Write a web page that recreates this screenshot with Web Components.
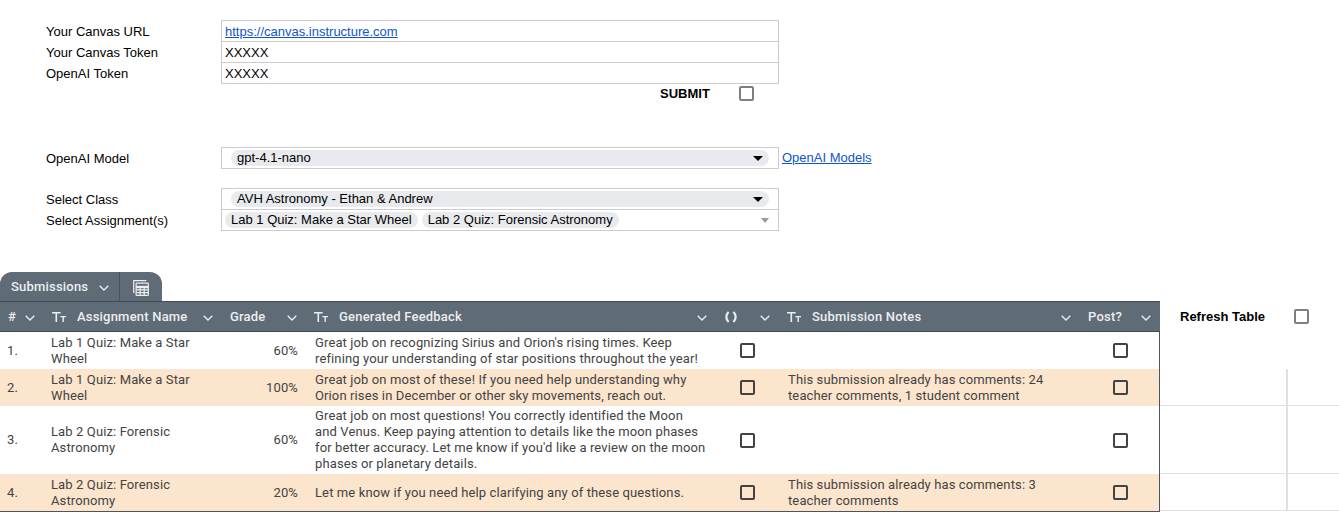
<!DOCTYPE html>
<html>
<head>
<meta charset="utf-8">
<title>Canvas feedback sheet</title>
<style>
html, body { margin: 0; padding: 0; background: #fff; overflow: hidden; }
body { width: 1339px; height: 515px; font-family: "Liberation Sans", Arial, sans-serif; font-size: 13px; color: #000; }
.top { padding: 20px 0 0 46px; display: flex; flex-direction: column; }
.submit { margin-bottom: 43px; }
.model { margin-bottom: 20px; }
.assign { margin-bottom: 42px; }
.sheet { display: flex; align-items: flex-start; }
</style>
</head>
<body>
<script>
const icons = {
  chevron: '<svg width="10" height="6" viewBox="0 0 10 6" fill="none" stroke="currentColor" stroke-width="1.3"><path d="M.7.7 5 5 9.3.7"/></svg>',
  type: '<svg width="14" height="10" viewBox="0 0 14 10" fill="currentColor"><path d="M0 0h8.6v1.5H5.1V10H3.5V1.5H0z"/><path d="M8.4 4h5.6v1.2h-2.1V10h-1.4V5.2H8.4z"/></svg>',
  braces: '<svg width="14" height="12" viewBox="0 0 14 12" fill="none" stroke="currentColor" stroke-width="2.2"><path d="M4.6 1C1.6 3.6 1.6 8.4 4.6 11"/><path d="M9.4 1c3 2.6 3 7.4 0 10"/></svg>',
  calc: '<svg width="16" height="16" viewBox="0 0 16 16" fill="none" stroke="currentColor" stroke-width="1.2"><path d="M.7 13V.7h12.6"/><rect x="3.1" y="3.1" width="12.2" height="12.2" rx=".6"/><path d="M3.1 7h12.2" stroke-width="2.4"/><path d="M3.1 9.9h12.2M3.1 12.6h12.2M7.1 8v7.3M11.2 8v7.3"/></svg>',
}

class FormRow extends HTMLElement {
  constructor() {
    super()
    this.attachShadow({ mode: 'open' }).innerHTML = `
<style>
:host { display: grid; grid-template-columns: 175px 558px; height: 21px; line-height: 21px; }
.value { border: 1px solid #ccc; border-bottom: 0; padding: 0 3px; box-sizing: border-box; height: 21px; display: flex; align-items: center; }
:host(:last-of-type) .value, :host([end]) .value { height: 22px; border-bottom: 1px solid #ccc; }
.label { height: 21px; padding-top: 1px; box-sizing: border-box; }
</style>
<div class="label"></div>
<div class="value"><slot></slot></div>`
    this.shadowRoot.querySelector('.label').textContent = this.getAttribute('label')
  }
}

class SheetPill extends HTMLElement {
  constructor() {
    super()
    this.attachShadow({ mode: 'open' }).innerHTML = `
<style>
:host { display: inline-flex; align-items: center; height: 16px; line-height: 16px; background: #e8eaed; border-radius: 8px; padding: 0 6px; margin-right: 4px; white-space: nowrap; }
:host([wide]) { flex: 1; margin: 0 6px 0 6px; justify-content: space-between; padding: 0 6px; }
i { width: 0; height: 0; border: 5px solid transparent; border-top: 5px solid #000; border-bottom: 0; margin-right: 0; }
</style>
<slot></slot><i></i>`
    if (!this.hasAttribute('wide')) this.shadowRoot.querySelector('i').remove()
  }
}

class SheetCheck extends HTMLElement {
  constructor() {
    super()
    this.attachShadow({ mode: 'open' }).innerHTML = `
<style>
:host { display: inline-block; width: 15px; height: 15px; box-sizing: border-box; border: 2px solid var(--check, #434343); border-radius: 2px; }
</style>`
  }
}

class ActionRow extends HTMLElement {
  constructor() {
    super()
    this.attachShadow({ mode: 'open' }).innerHTML = `
<style>
:host { display: flex; align-items: center; font-weight: bold; --check: #7f7f7f; height: 21px; }
span { display: block; }
sheet-check { margin-left: 29px; }
</style>
<span><slot></slot></span><sheet-check></sheet-check>`
  }
}

class TableTabs extends HTMLElement {
  constructor() {
    super()
    this.attachShadow({ mode: 'open' }).innerHTML = `
<style>
:host { display: flex; width: 162px; height: 29px; box-sizing: border-box; background: #5f6b76; color: #eceff1; border-radius: 12px 12px 0 0; font: 500 13px Roboto, sans-serif; letter-spacing: .2px; }
.name { width: 120px; box-sizing: border-box; padding-left: 11px; display: flex; align-items: center; border-right: 1px solid #49545e; }
.name svg { margin-left: 11px; margin-top: 2px; }
.view { flex: 1; display: flex; align-items: center; justify-content: center; padding-top: 2px; }
</style>
<div class="name"><slot></slot>${icons.chevron}</div>
<div class="view">${icons.calc}</div>`
  }
}

class ColHead extends HTMLElement {
  constructor() {
    super()
    const icon = this.getAttribute('icon')
    this.attachShadow({ mode: 'open' }).innerHTML = `
<style>
:host { display: flex; align-items: center; box-sizing: border-box; padding: 0 9px 0 8px; color: #eceff1; font: 500 13px Roboto, sans-serif; letter-spacing: .2px; white-space: nowrap; }
.ic { display: flex; margin-right: 11px; }
.ic:empty { display: none; }
.t { flex: 1; display: block; }
svg { display: block; }
.c { margin-top: 2px; }
</style>
<div class="ic">${icon ? icons[icon] : ''}</div>
<div class="t"><slot></slot></div>
<div class="c">${icons.chevron}</div>`
  }
}

class SubRow extends HTMLElement {
  constructor() {
    super()
    this.attachShadow({ mode: 'open' }).innerHTML = `
<style>
:host { display: grid; grid-template-columns: var(--cols); box-sizing: border-box; align-items: center; font: 13px/16px Roboto, sans-serif; color: #434343; letter-spacing: .12px; height: var(--h, 37px); }
:host([alt]) { background: #fce5cd; }
</style>
<slot></slot>`
  }
}

class SubTable extends HTMLElement {
  constructor() {
    super()
    this.attachShadow({ mode: 'open' }).innerHTML = `
<style>
:host { display: block; width: 1160px; --cols: 44px 178px 84px 410px 63px 301px 80px; }
.body { border: 1px solid #4a5560; border-width: 0 1px 1px 0; }
.head { display: grid; grid-template-columns: var(--cols); height: 31px; background: #5f6b76; border-top: 1px solid #414b55; border-bottom: 1px solid #414b55; box-sizing: border-box; }
</style>
<slot name="tabs"></slot>
<div class="head"><slot name="head"></slot></div>
<div class="body"><slot></slot></div>`
  }
}

class Cell extends HTMLElement {
  constructor() {
    super()
    this.attachShadow({ mode: 'open' }).innerHTML = `
<style>
:host { display: block; padding: 0 7px; min-width: 0; }
:host([num]) { text-align: right; padding-right: 8px; }
:host([check]) { display: flex; justify-content: center; padding: 0; }
:host([wrap]) { padding: 0 9px; }
</style>
<slot></slot>`
  }
}

class BlankGrid extends HTMLElement {
  constructor() {
    super()
    this.attachShadow({ mode: 'open' }).innerHTML = `
<style>
:host { display: grid; flex: 1; grid-template-columns: 128px 1fr; grid-template-rows: 37px 37px 68px 37px; margin-top: 37px; }
div { box-sizing: border-box; border-bottom: 1px solid #e0e0e0; border-right: 2px solid #e0e0e0; }
div:nth-child(even) { border-right: 0; }
.none { border: 0; grid-column: 1 / 3; }
</style>
<div class="none"></div>
<div></div><div></div><div></div><div></div><div></div><div></div>`
  }
}

customElements.define('form-row', FormRow)
customElements.define('sheet-pill', SheetPill)
customElements.define('sheet-check', SheetCheck)
customElements.define('action-row', ActionRow)
customElements.define('table-tabs', TableTabs)
customElements.define('col-head', ColHead)
customElements.define('sub-row', SubRow)
customElements.define('sub-table', SubTable)
customElements.define('sub-cell', Cell)
customElements.define('blank-grid', BlankGrid)

document.body.innerHTML = `
<div class="top">
  <div>
    <form-row label="Your Canvas URL"><a href="#" style="color:#1155cc">https://canvas.instructure.com</a></form-row>
    <form-row label="Your Canvas Token">XXXXX</form-row>
    <form-row label="OpenAI Token" end>XXXXX</form-row>
  </div>
  <action-row class="submit" style="margin-left:614px">SUBMIT</action-row>
  <div class="model" style="display:flex">
    <form-row label="OpenAI Model" end><sheet-pill wide>gpt-4.1-nano</sheet-pill></form-row>
    <a href="#" style="color:#1155cc;margin-left:3px;line-height:21px">OpenAI Models</a>
  </div>
  <div class="assign">
    <form-row label="Select Class"><sheet-pill wide>AVH Astronomy - Ethan &amp; Andrew</sheet-pill></form-row>
    <form-row label="Select Assignment(s)" end>
      <sheet-pill>Lab 1 Quiz: Make a Star Wheel</sheet-pill><sheet-pill>Lab 2 Quiz: Forensic Astronomy</sheet-pill>
      <span style="margin-left:auto;margin-right:6px;border:4px solid transparent;border-top:5px solid #999;border-bottom:0"></span>
    </form-row>
  </div>
</div>
<div class="sheet">
  <sub-table>
    <table-tabs slot="tabs">Submissions</table-tabs>
    <col-head slot="head">#</col-head>
    <col-head slot="head" icon="type">Assignment Name</col-head>
    <col-head slot="head">Grade</col-head>
    <col-head slot="head" icon="type">Generated Feedback</col-head>
    <col-head slot="head" icon="braces"></col-head>
    <col-head slot="head" icon="type">Submission Notes</col-head>
    <col-head slot="head">Post?</col-head>
    <sub-row>
      <sub-cell>1.</sub-cell><sub-cell>Lab 1 Quiz: Make a Star Wheel</sub-cell><sub-cell num>60%</sub-cell>
      <sub-cell wrap>Great job on recognizing Sirius and Orion's rising times. Keep refining your understanding of star positions throughout the year!</sub-cell>
      <sub-cell check><sheet-check></sheet-check></sub-cell><sub-cell wrap></sub-cell><sub-cell check><sheet-check></sheet-check></sub-cell>
    </sub-row>
    <sub-row alt>
      <sub-cell>2.</sub-cell><sub-cell>Lab 1 Quiz: Make a Star Wheel</sub-cell><sub-cell num>100%</sub-cell>
      <sub-cell wrap>Great job on most of these! If you need help understanding why Orion rises in December or other sky movements, reach out.</sub-cell>
      <sub-cell check><sheet-check></sheet-check></sub-cell><sub-cell wrap>This submission already has comments: 24 teacher comments, 1 student comment</sub-cell><sub-cell check><sheet-check></sheet-check></sub-cell>
    </sub-row>
    <sub-row style="--h:68px">
      <sub-cell>3.</sub-cell><sub-cell>Lab 2 Quiz: Forensic Astronomy</sub-cell><sub-cell num>60%</sub-cell>
      <sub-cell wrap>Great job on most questions! You correctly identified the Moon and Venus. Keep paying attention to details like the moon phases for better accuracy. Let me know if you'd like a review on the moon phases or planetary details.</sub-cell>
      <sub-cell check><sheet-check></sheet-check></sub-cell><sub-cell wrap></sub-cell><sub-cell check><sheet-check></sheet-check></sub-cell>
    </sub-row>
    <sub-row alt>
      <sub-cell>4.</sub-cell><sub-cell>Lab 2 Quiz: Forensic Astronomy</sub-cell><sub-cell num>20%</sub-cell>
      <sub-cell wrap>Let me know if you need help clarifying any of these questions.</sub-cell>
      <sub-cell check><sheet-check></sheet-check></sub-cell><sub-cell wrap>This submission already has comments: 3 teacher comments</sub-cell><sub-cell check><sheet-check></sheet-check></sub-cell>
    </sub-row>
  </sub-table>
  <div style="flex:1;margin-top:29px;display:flex;flex-direction:column">
    <action-row style="margin-left:20px;height:31px">Refresh Table</action-row>
    <blank-grid style="margin-top:0"></blank-grid>
  </div>
</div>`
</script>
</body>
</html>
